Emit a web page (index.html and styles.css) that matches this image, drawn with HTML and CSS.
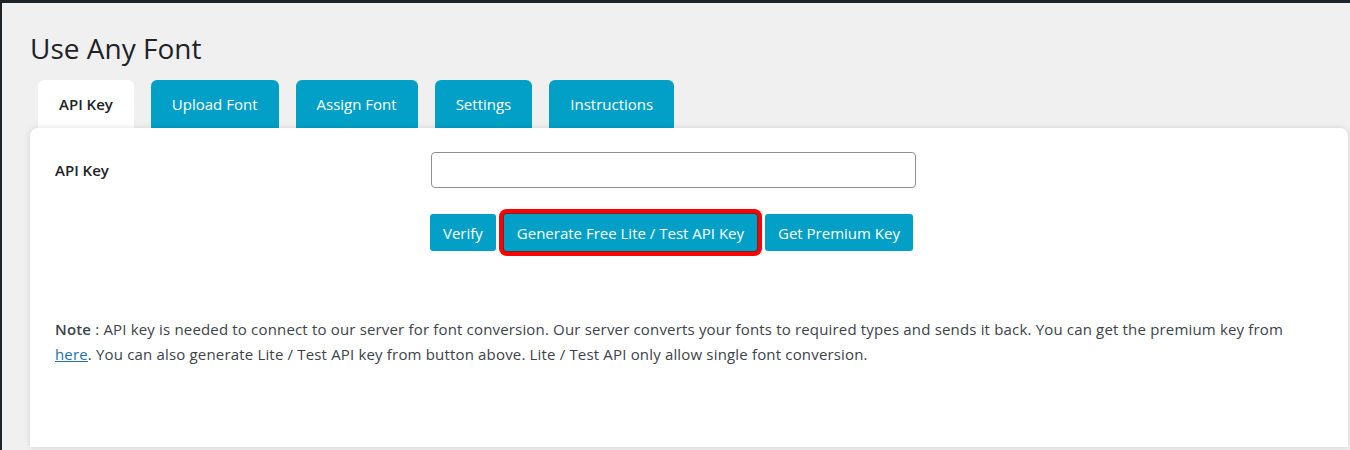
FILE: index.html
```html
<!DOCTYPE html>
<html>

<head>
    <title>Use Any Font</title>
    <link rel="stylesheet" href="styles.css">
</head>

<body>
    <div class="wrap">
        <h1>Use Any Font</h1>
        <nav class="tabs">
            <a href="#" class="tab active">API Key</a>
            <a href="#" class="tab">Upload Font</a>
            <a href="#" class="tab">Assign Font</a>
            <a href="#" class="tab">Settings</a>
            <a href="#" class="tab">Instructions</a>
        </nav>
        <section class="panel">
            <form class="key-form">
                <label for="apiKey">API Key</label>
                <input type="text" id="apiKey" name="apiKey">
                <div class="actions">
                    <button type="button">Verify</button>
                    <button type="button" class="marked">Generate Free Lite / Test API Key</button>
                    <button type="button">Get Premium Key</button>
                </div>
            </form>
            <p class="note"><strong>Note</strong> : API key is needed to connect to our server for font conversion. Our server converts your fonts to required types and sends it back. You can get the premium key from <a href="#">here</a>. You can also generate Lite / Test API key from button above. Lite / Test API only allow single font conversion.</p>
        </section>
    </div>
</body>

</html>
```

FILE: styles.css
```css
body {
    margin: 0;
    font-family: 'Open Sans', 'Noto Sans', sans-serif;
    font-size: 15px;
    color: #3c434a;
    background-color: #f0f0f1;
    border-top: 3px solid #1d2327;
    border-left: 2px solid #1d2327;
    height: 447px;
    overflow: hidden;
}

.wrap {
    padding: 27px 2px 0 28px;
}

h1 {
    margin: 0 0 14px 0;
    font-size: 28px;
    font-weight: 400;
    color: #1d2327;
    line-height: 36px;
}

.tabs {
    display: flex;
    gap: 17px;
    padding-left: 8px;
}

.tab {
    display: block;
    height: 48px;
    line-height: 48px;
    padding: 0 21px;
    background-color: #02a0c6;
    color: #fff;
    text-decoration: none;
    border-radius: 6px 6px 0 0;
}

.tab.active {
    background-color: #fff;
    color: #1d2327;
    font-weight: 600;
}

.panel {
    background-color: #fff;
    border-radius: 8px 8px 0 0;
    box-shadow: 0 0 6px rgba(0, 0, 0, 0.12);
    padding: 24px 25px 80px 25px;
    position: relative;
}

.key-form {
    display: grid;
    grid-template-columns: 376px 485px;
    row-gap: 26px;
    align-items: center;
}

label {
    font-weight: 600;
    color: #1d2327;
}

input {
    height: 36px;
    box-sizing: border-box;
    border: 1px solid #8c8f94;
    border-radius: 4px;
    padding: 0 8px;
    font-size: 15px;
}

.actions {
    grid-column: 2;
    display: flex;
    gap: 8px;
    margin-left: -1px;
    white-space: nowrap;
}

button {
    flex: none;
    height: 37px;
    padding: 0 13px;
    border: none;
    border-radius: 3px;
    background-color: #02a0c6;
    color: #fff;
    font-family: inherit;
    font-size: 15px;
    cursor: pointer;
}

button.marked {
    box-shadow: 0 0 0 1px #6a2a2a, 0 0 0 5px #ff0000;
}

.note {
    margin: 66px 0 0 0;
    line-height: 25px;
    letter-spacing: 0.17px;
}

.note strong {
    font-weight: 600;
}

.note a {
    color: #2271b1;
}
```
